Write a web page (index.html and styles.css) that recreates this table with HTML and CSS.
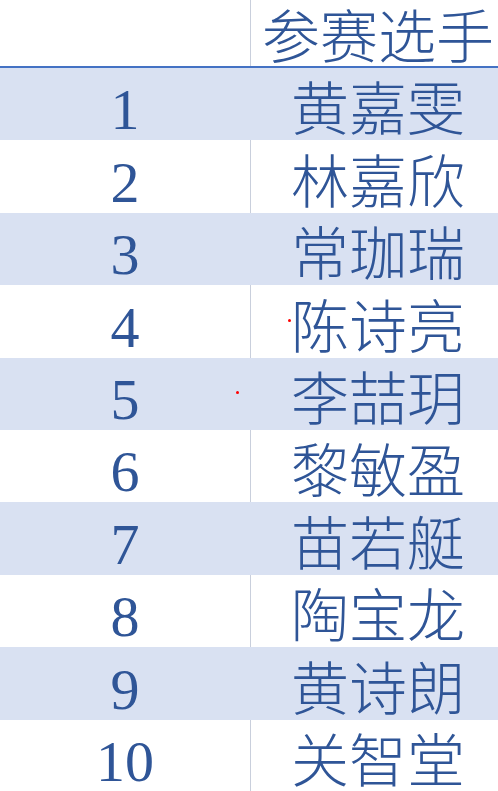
FILE: index.html
```html
<!DOCTYPE html>
<html lang="zh">
<head>
<meta charset="utf-8">
<title>参赛选手</title>
<link rel="stylesheet" href="styles.css">
</head>
<body>
<div class="sheet">
  <div class="row header">
    <div class="cell num"></div>
    <div class="cell name">参赛选手</div>
  </div>
  <div class="row band"><div class="cell num">1</div><div class="cell name">黄嘉雯</div></div>
  <div class="row"><div class="cell num">2</div><div class="cell name">林嘉欣</div></div>
  <div class="row band"><div class="cell num">3</div><div class="cell name">常珈瑞</div></div>
  <div class="row"><div class="cell num">4</div><div class="cell name">陈诗亮</div></div>
  <div class="row band"><div class="cell num">5</div><div class="cell name">李喆玥</div></div>
  <div class="row"><div class="cell num">6</div><div class="cell name">黎敏盈</div></div>
  <div class="row band"><div class="cell num">7</div><div class="cell name">苗若艇</div></div>
  <div class="row"><div class="cell num">8</div><div class="cell name">陶宝龙</div></div>
  <div class="row band"><div class="cell num">9</div><div class="cell name">黄诗朗</div></div>
  <div class="row"><div class="cell num">10</div><div class="cell name">关智堂</div></div>
  <span class="dot dot-a"></span>
  <span class="dot dot-b"></span>
</div>
</body>
</html>
```
FILE: styles.css
```css
html, body {
  margin: 0;
  padding: 0;
  background: #ffffff;
  overflow: hidden;
}
body {
  width: 498px;
  height: 791px;
}
.sheet {
  position: relative;
  width: 505px;
  display: flex;
  flex-direction: column;
  color: #2f5597;
}
.row {
  display: grid;
  grid-template-columns: 250px 255px;
  height: 72.4px;
  align-items: end;
  background: #ffffff;
}
.row.band {
  background: #d9e1f2;
}
.row.header {
  height: 66px;
  border-bottom: 2px solid #4472c4;
}
.cell {
  text-align: center;
  white-space: nowrap;
  height: 100%;
  box-sizing: border-box;
  display: flex;
  align-items: flex-end;
  justify-content: center;
}
.num {
  font-family: "Liberation Serif", serif;
  font-size: 58px;
  line-height: 58px;
  padding-bottom: 1px;
}
.name {
  font-family: "Noto Sans CJK SC", sans-serif;
  font-weight: 300;
  font-size: 58px;
  line-height: 58px;
  padding-bottom: 6px;
  border-left: 1px solid #c9cfdc;
}
.row.band .name {
  border-left-color: transparent;
}
.row.header .name {
  padding-bottom: 4px;
}
.dot {
  position: absolute;
  width: 3px;
  height: 3px;
  border-radius: 50%;
  background: #ff0000;
}
.dot-a { left: 288px; top: 319px; }
.dot-b { left: 236px; top: 391px; }
```
